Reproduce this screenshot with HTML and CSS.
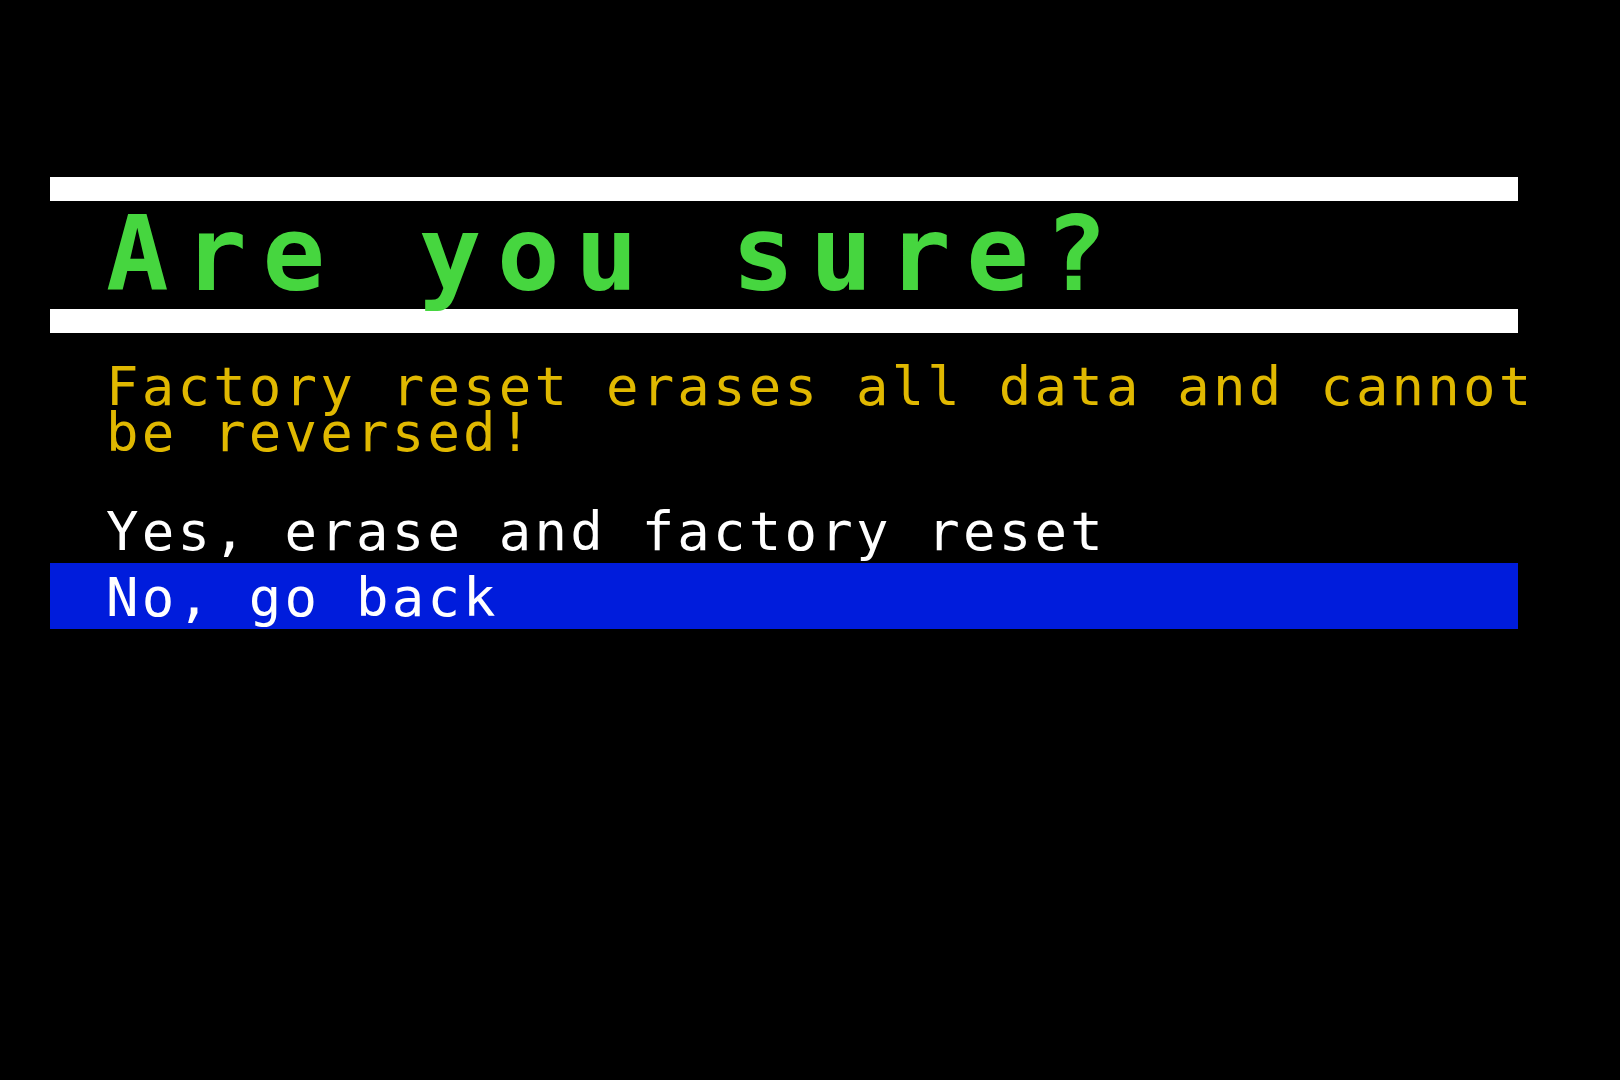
FILE: index.html
```html
<!DOCTYPE html>
<html lang="en">
<head>
  <meta charset="UTF-8">
  <title>Factory Reset</title>
  <link rel="stylesheet" href="styles.css">
</head>
<body>
  <div class="screen">
    <div class="rule"></div>
    <div class="title">Are you sure?</div>
    <div class="rule"></div>

    <div class="warning">Factory reset erases all data and cannot be reversed!</div>

    <div class="menu">
      <div class="menu-item">Yes, erase and factory reset</div>
      <div class="menu-item selected">No, go back</div>
    </div>
  </div>
</body>
</html>
```

FILE: styles.css
```css
:root {
  --bg: #000000;
  --rule: #FFFFFF;
  --title: #46D63F;
  --warning: #E0B800;
  --item: #FFFFFF;
  --selected: #001CDC;
}

body {
  margin: 0;
  padding: 0;
  background-color: var(--bg);
  font-family: 'DejaVu Sans Mono', 'Liberation Mono', monospace;
}

.screen {
  width: 1468px;
  padding: 177px 0 0 50px;
}

.rule {
  height: 24px;
  background-color: var(--rule);
}

.title {
  padding: 0 0 2px 56px;
  font-size: 104px;
  font-weight: bold;
  line-height: 106px;
  letter-spacing: 15.6px;
  color: var(--title);
  white-space: nowrap;
}

.warning {
  width: 1480px;
  margin-top: 31px;
  padding-left: 56px;
  font-size: 54px;
  line-height: 46px;
  letter-spacing: 3.2px;
  color: var(--warning);
}

.menu {
  margin-top: 41px;
}

.menu-item {
  padding: 3px 0 0 56px;
  font-size: 54px;
  line-height: 63px;
  letter-spacing: 3.2px;
  color: var(--item);
  white-space: nowrap;
}

.menu-item.selected {
  background-color: var(--selected);
}
```
